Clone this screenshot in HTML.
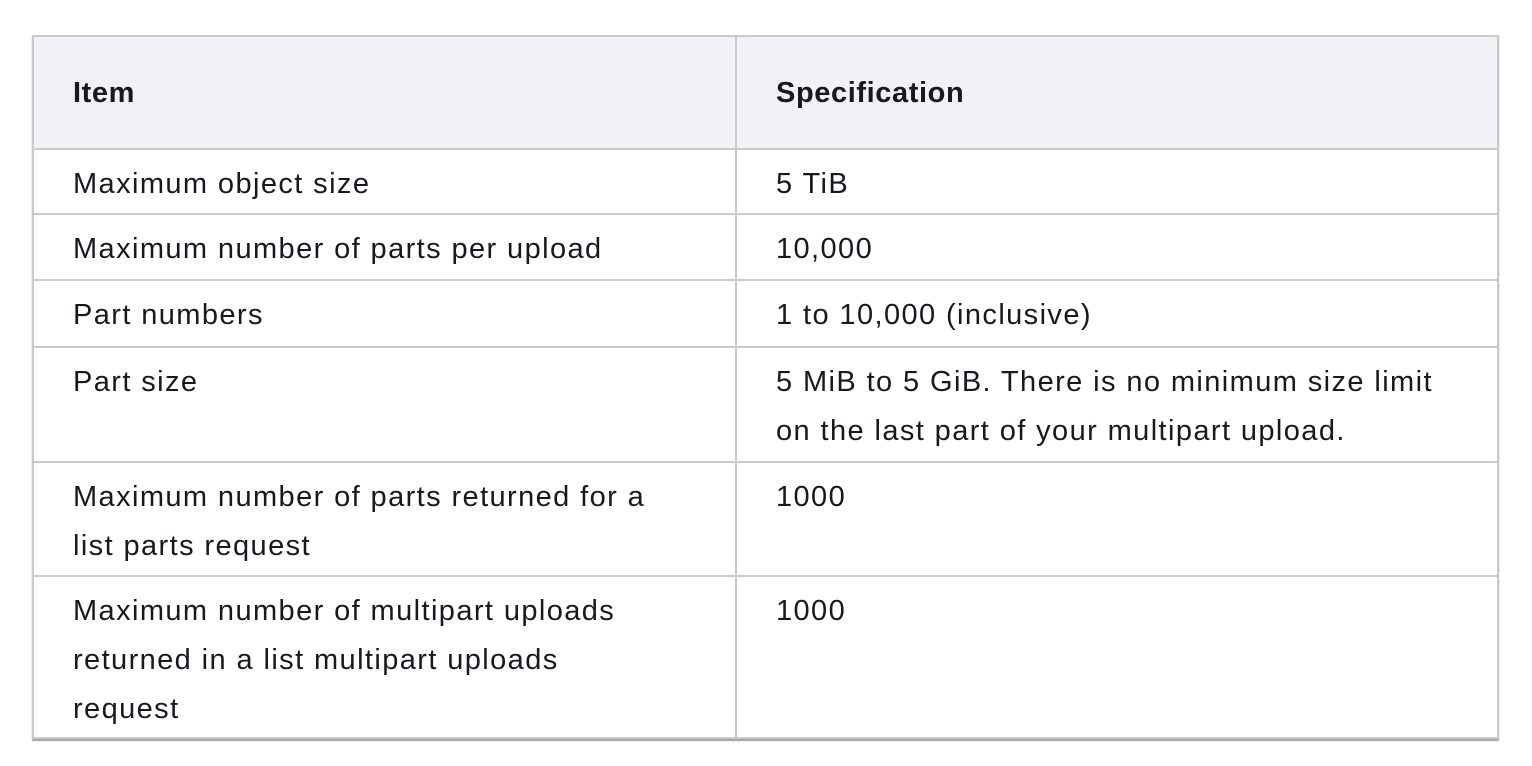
<!DOCTYPE html>
<html><head><style>
body{margin:0;background:#fff;font-family:"Liberation Sans",sans-serif;color:#16191f;}
table{position:absolute;left:32px;top:35px;width:1467px;border-collapse:collapse;font-size:29px;letter-spacing:1.4px;box-shadow:0 2px 1px #9aa0a8;}
td,th{border:2px solid #c8cacf;text-align:left;vertical-align:top;padding:10px 30px 0 39px;line-height:49px;box-sizing:border-box;}
th{background:#f2f2f6;font-weight:bold;vertical-align:middle;padding-top:2px;height:113px;letter-spacing:0.6px;}
td:first-child,th:first-child{width:703px;padding-right:68px;}
</style></head><body>
<table>
<tr><th>Item</th><th>Specification</th></tr>
<tr style="height:65px"><td>Maximum object size</td><td>5 TiB</td></tr>
<tr style="height:66px"><td>Maximum number of parts per upload</td><td>10,000</td></tr>
<tr style="height:67px"><td>Part numbers</td><td>1 to 10,000 (inclusive)</td></tr>
<tr style="height:115px"><td>Part size</td><td>5 MiB to 5 GiB. There is no minimum size limit on the last part of your multipart upload.</td></tr>
<tr style="height:114px"><td>Maximum number of parts returned for a list parts request</td><td>1000</td></tr>
<tr style="height:162px"><td>Maximum number of multipart uploads returned in a list multipart uploads request</td><td>1000</td></tr>
</table>
</body></html>
